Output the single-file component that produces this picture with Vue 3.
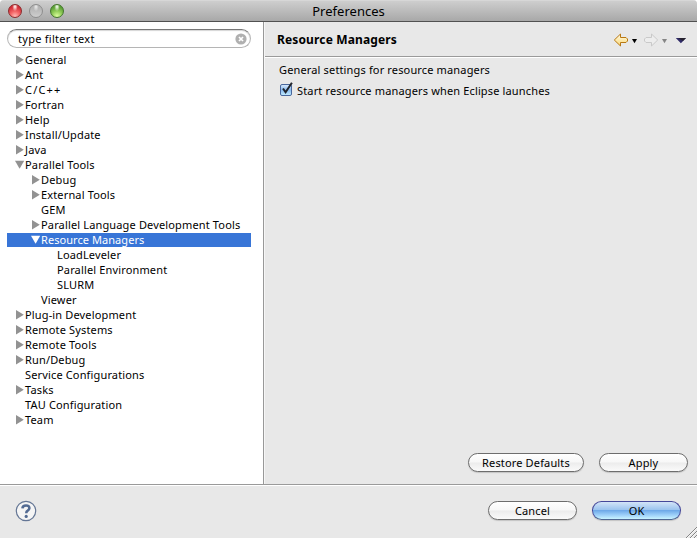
<script setup>
const tree = [
  { label: 'General', level: 0, arrow: 'closed' },
  { label: 'Ant', level: 0, arrow: 'closed' },
  { label: 'C/C++', level: 0, arrow: 'closed', spacing: 'wide' },
  { label: 'Fortran', level: 0, arrow: 'closed' },
  { label: 'Help', level: 0, arrow: 'closed' },
  { label: 'Install/Update', level: 0, arrow: 'closed' },
  { label: 'Java', level: 0, arrow: 'closed' },
  { label: 'Parallel Tools', level: 0, arrow: 'open' },
  { label: 'Debug', level: 1, arrow: 'closed' },
  { label: 'External Tools', level: 1, arrow: 'closed' },
  { label: 'GEM', level: 1 },
  { label: 'Parallel Language Development Tools', level: 1, arrow: 'closed' },
  { label: 'Resource Managers', level: 1, arrow: 'open', selected: true },
  { label: 'LoadLeveler', level: 2 },
  { label: 'Parallel Environment', level: 2 },
  { label: 'SLURM', level: 2 },
  { label: 'Viewer', level: 1 },
  { label: 'Plug-in Development', level: 0, arrow: 'closed' },
  { label: 'Remote Systems', level: 0, arrow: 'closed' },
  { label: 'Remote Tools', level: 0, arrow: 'closed' },
  { label: 'Run/Debug', level: 0, arrow: 'closed' },
  { label: 'Service Configurations', level: 0 },
  { label: 'Tasks', level: 0, arrow: 'closed' },
  { label: 'TAU Configuration', level: 0 },
  { label: 'Team', level: 0, arrow: 'closed' },
]
</script>

<template>
  <div class="window">
    <header class="titlebar">
      <div class="lights">
        <span class="light red"></span>
        <span class="light grey"></span>
        <span class="light green"></span>
      </div>
      <span class="title">Preferences</span>
    </header>

    <main class="body">
      <aside class="sidebar">
        <div class="search">
          <span>type filter text</span>
          <svg class="clear" viewBox="0 0 12 12" width="12" height="12">
            <circle cx="6" cy="6" r="5.6" fill="#b0b0b0" />
            <path d="M4 4L8 8M8 4L4 8" stroke="#fff" stroke-width="1.7" />
          </svg>
        </div>
        <ul class="tree">
          <li v-for="item in tree" :key="item.label" :class="['row', 'level-' + item.level, item.spacing, { selected: item.selected }]">
            <svg class="arrow" viewBox="0 0 10 14" width="10" height="14">
              <path v-if="item.arrow === 'closed'" d="M1 2V11.5L8.8 6.7Z" />
              <path v-else-if="item.arrow === 'open'" d="M0 2.8H9.2L4.6 10.8Z" />
            </svg>
            <span class="label">{{ item.label }}</span>
          </li>
        </ul>
      </aside>

      <section class="page">
        <div class="page-head">
          <h1>Resource Managers</h1>
          <div class="nav">
            <svg viewBox="0 0 76 16" width="76" height="16">
              <defs>
                <linearGradient id="gold" x1="0" y1="0" x2="0" y2="1">
                  <stop offset="0" stop-color="#fffbe8" />
                  <stop offset="1" stop-color="#fbd873" />
                </linearGradient>
              </defs>
              <path d="M1.3 8L7.5 2V5.5H13L14.5 7V9L13 10.5H7.5V14Z" fill="url(#gold)" stroke="#b87812" />
              <path d="M19 7H24L21.5 11.2Z" fill="#000" />
              <path d="M44.7 8L38.5 2V5.5H33L31.5 7V9L33 10.5H38.5V14Z" fill="#ededed" stroke="#c9c9c9" />
              <path d="M49 7H54L51.5 11.2Z" fill="#858585" />
              <path d="M62.8 6H73L67.9 11.2Z" fill="#302b68" />
              <path d="M65 6H73L70 9Z" fill="#26222e" />
            </svg>
          </div>
        </div>
        <div class="page-content">
          <p>General settings for resource managers</p>
          <label class="check">
            <svg viewBox="0 0 14 16" width="14" height="16">
              <defs>
                <linearGradient id="box" x1="0" y1="0" x2="0" y2="1">
                  <stop offset="0" stop-color="#dcebfb" />
                  <stop offset=".5" stop-color="#88b9ee" />
                  <stop offset="1" stop-color="#c4eeff" />
                </linearGradient>
              </defs>
              <rect x=".5" y="2.5" width="11" height="11" rx="1.5" fill="url(#box)" stroke="#49679c" />
              <path d="M3 6.5L5.6 10.2L11.9 .8" fill="none" stroke="#20242c" stroke-width="2" />
            </svg>
            <span>Start resource managers when Eclipse launches</span>
          </label>
        </div>
        <div class="page-actions">
          <button class="btn restore">Restore Defaults</button>
          <button class="btn apply">Apply</button>
        </div>
      </section>
    </main>

    <footer class="footer">
      <svg class="help" viewBox="0 0 22 22" width="22" height="22">
        <circle cx="11" cy="11" r="9.7" fill="#f5f5f5" stroke="#647695" stroke-width="1.2" />
        <path d="M7.4 8.3Q7.6 5.5 11 5.5Q14.4 5.5 14.4 8.1Q14.4 9.5 12.7 10.6Q11.2 11.5 11.2 13.2" fill="none" stroke="#536b93" stroke-width="2.5" />
        <circle cx="11.2" cy="16.4" r="1.6" fill="#536b93" />
      </svg>
      <div class="footer-actions">
        <button class="btn cancel">Cancel</button>
        <button class="btn ok">OK</button>
      </div>
      <svg class="grip" viewBox="0 0 12 12" width="12" height="12">
        <path d="M1 12L12 1M5 12L12 5M9 12L12 9" stroke="#858585" />
        <path d="M2 12L12 2M6 12L12 6M10 12L12 10" stroke="#fff" stroke-width=".7" />
      </svg>
    </footer>
  </div>
</template>

<style>
body { background: #fff; }
</style>

<style scoped>
* { box-sizing: border-box; }
.window {
  width: 697px; height: 538px; display: flex; flex-direction: column;
  overflow: hidden; background: #e8e8e8; border-radius: 4px 4px 0 0;
  font: 400 11px/15px "Noto Sans", "Open Sans", sans-serif; letter-spacing: .15px; color: #000;
}
.titlebar {
  height: 22px; flex: none; display: grid; grid-template-columns: 1fr auto 1fr; align-items: center;
  background: linear-gradient(#e0e0e0 0, #cecece 1px, #a8a8a8 21px); border-bottom: 1px solid #515151;
}
.lights { display: flex; gap: 7px; padding-left: 8px; }
.light { width: 14px; height: 14px; border-radius: 50%; border: 1px solid; }
.red { border-color: #8b2b2d; background: radial-gradient(ellipse at 50% 14%, #fff 0, #f2a2a2 16%, transparent 32%), radial-gradient(circle at 50% 92%, #ffb9b4 0, #f56a6a 35%, #d12b36 75%); }
.grey { border-color: #8d8d8d; background: radial-gradient(ellipse at 50% 14%, #eee 0, transparent 32%), linear-gradient(#acacac, #cecece); }
.green { border-color: #43762c; background: radial-gradient(ellipse at 50% 14%, #fff 0, #b8d8a0 16%, transparent 32%), radial-gradient(circle at 50% 92%, #dcff9e 0, #92cd59 40%, #5a9e36 75%); }
.title { font-size: 13px; line-height: 20px; letter-spacing: .03px; }
.body { height: 462px; flex: none; display: flex; }
.sidebar { width: 264px; flex: none; background: #fff; border-right: 1px solid #989898; padding: 7px 12px 0 7px; }
.search {
  height: 19px; display: flex; align-items: center; justify-content: space-between; padding: 0 3px 0 10px;
  border: 1px solid #b5b5b5; border-top-color: #777; border-radius: 10px; box-shadow: inset 0 1px 1px #d5d5d5; letter-spacing: .28px;
}
.clear { display: block; }
.tree { list-style: none; margin: 0; padding: 5px 0 0; }
.row { height: 14px; margin-bottom: 1px; display: flex; align-items: center; padding-left: 8px; line-height: 14px; white-space: nowrap; }
.wide { letter-spacing: 1.2px; }
.level-1 { padding-left: 24px; }
.level-2 { padding-left: 40px; }
.arrow { flex: none; fill: #929292; }
.selected { background: #3875d7; color: #fff; letter-spacing: .06px; }
.selected .arrow { fill: #fff; }
.page { flex: 1; display: flex; flex-direction: column; border-left: 1px solid #f6f6f6; }
.page-head {
  height: 36px; flex: none; display: flex; align-items: center; justify-content: space-between;
  padding: 0 8px 0 12px; border-bottom: 1px solid #fff; box-shadow: inset 0 -1px #9a9a9a;
}
h1 { margin: 0; font-size: 12px; line-height: 16px; font-weight: 700; letter-spacing: .14px; }
.nav svg { display: block; }
.page-content { flex: 1; padding: 4px 0 0 14px; }
p { margin: 0; }
.check { display: flex; align-items: center; gap: 3px; padding-top: 5px; padding-left: 1px; }
.page-actions { display: flex; justify-content: flex-end; gap: 15px; padding: 0 9px 12px 0; }
.btn {
  height: 19px; padding: 0 0 1px; border: 1.5px solid #6d6d6d; border-radius: 10px; font: inherit; letter-spacing: inherit; color: #000;
  line-height: 15px; background: linear-gradient(#fff 0, #f7f7f7 48%, #ececec 52%, #fafafa 100%); box-shadow: 0 1px 1px #c4c4c4;
}
.restore { width: 116px; }
.apply { width: 89px; }
.cancel, .ok { width: 89px; }
.ok { border-color: #45489a; border-bottom-color: #4f6692; background: linear-gradient(#d3e4f8 0, #9cc4ef 45%, #6fa9e8 50%, #a0d2fa 78%, #c9f3ff 100%); }
.footer {
  flex: 1; display: flex; align-items: center; justify-content: space-between; padding: 0 0 2px 15px;
  border-top: 1px solid #9a9a9a; box-shadow: inset 0 1px #fff;
}
.footer-actions { display: flex; gap: 15px; margin-left: auto; padding-right: 4px; }
.grip { align-self: flex-end; margin-bottom: -2px; }
</style>
